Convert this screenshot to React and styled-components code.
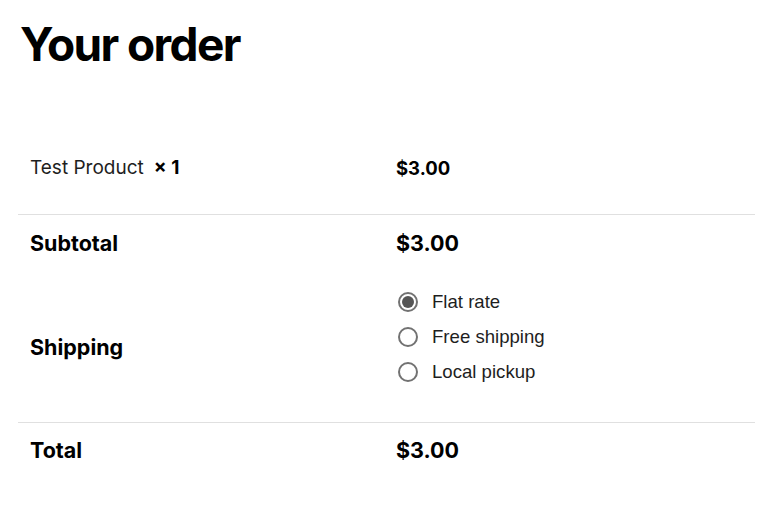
import React from 'react';
import styled, { createGlobalStyle } from 'styled-components';

const GlobalStyle = createGlobalStyle`
    html, body {
        margin: 0;
        padding: 0;
        background: #FFFFFF;
    }

    body {
        font-family: Inter, "Noto Sans", sans-serif;
        color: #1E1E1E;
    }
`;

const Page = styled.div`
    width: 737px;
    padding: 17px 13px 0 18px;
`;

const Title = styled.h1`
    margin: 0 0 47px 2px;
    font-size: 46px;
    font-weight: 700;
    line-height: 1.2;
    letter-spacing: -0.035em;
    color: #000000;
`;

const Table = styled.table`
    width: 100%;
    border-collapse: collapse;
    table-layout: fixed;
`;

const Row = styled.tr`
    border-top: ${({ $divider }) => ($divider ? '1px solid #E0E0E0' : 'none')};
`;

const Cell = styled.td`
    width: ${({ $wide }) => ($wide ? 'auto' : '342px')};
    padding: ${({ $pad }) => $pad || '16px 12px'};
    vertical-align: middle;
    font-size: ${({ $size }) => $size || 21.5}px;
    font-weight: ${({ $bold }) => ($bold ? 700 : 400)};
    line-height: 24px;
    color: #000000;
`;

const ProductName = styled.span`
    font-weight: 400;
    color: #1E1E1E;
`;

const Quantity = styled.strong`
    margin-left: 10px;
    font-weight: 700;
`;

const RateList = styled.ul`
    list-style: none;
    margin: 0 0 21px;
    padding: 0;
`;

const Rate = styled.li`
    display: flex;
    align-items: center;
    gap: 14px;
    height: 35px;
    padding-left: 2px;
    font-family: "Liberation Sans", Arial, sans-serif;
    font-size: 18.6px;
    font-weight: 400;
    color: #1E1E1E;
`;

const Radio = styled.span`
    position: relative;
    flex: none;
    width: 20px;
    height: 20px;
    box-sizing: border-box;
    border: 2px solid #727272;
    border-radius: 50%;

    &::after {
        content: '';
        display: ${({ $checked }) => ($checked ? 'block' : 'none')};
        position: absolute;
        inset: 2px;
        border-radius: 50%;
        background: #555555;
    }
`;

const rates = [
    { label: 'Flat rate', checked: true },
    { label: 'Free shipping', checked: false },
    { label: 'Local pickup', checked: false },
];

export default function App() {
    return (
        <>
            <GlobalStyle />
            <Page>
                <Title>Your order</Title>
                <Table>
                    <tbody>
                        <Row>
                            <Cell $pad="37px 12px 34px" $size={19}>
                                <ProductName>Test Product</ProductName>
                                <Quantity>× 1</Quantity>
                            </Cell>
                            <Cell $wide $pad="37px 12px 34px" $size={18.5} $bold>$3.00</Cell>
                        </Row>
                        <Row $divider>
                            <Cell $pad="16px 12px 17px" $bold>Subtotal</Cell>
                            <Cell $wide $pad="16px 12px 17px" $bold>$3.00</Cell>
                        </Row>
                        <Row>
                            <Cell $pad="12px" $bold>Shipping</Cell>
                            <Cell $wide $pad="12px">
                                <RateList>
                                    {rates.map((rate) => (
                                        <Rate key={rate.label}>
                                            <Radio $checked={rate.checked} />
                                            {rate.label}
                                        </Rate>
                                    ))}
                                </RateList>
                            </Cell>
                        </Row>
                        <Row $divider>
                            <Cell $pad="15px 12px 16px" $bold>Total</Cell>
                            <Cell $wide $pad="15px 12px 16px" $bold>$3.00</Cell>
                        </Row>
                    </tbody>
                </Table>
            </Page>
        </>
    );
}
